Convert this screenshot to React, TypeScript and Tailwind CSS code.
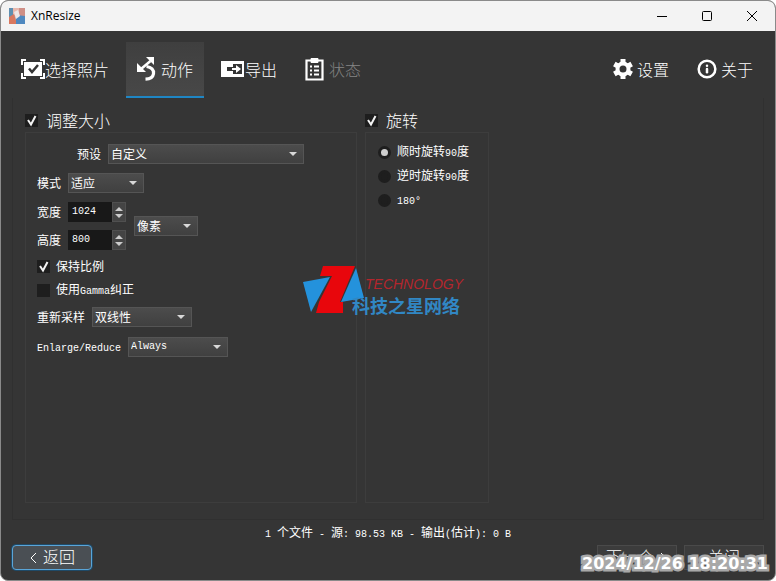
import React from "react";
import { Info } from "lucide-react";
import clsx from "clsx";

const OPTION_LABELS = {
  preset: ["自定义"],
  mode: ["适应"],
  unit: ["像素"],
  resample: ["双线性"],
  enlarge: ["Always"],
};

// Half-width run inside a line of Chinese text
function Latin({ children }: { children: React.ReactNode }) {
  return (
    <span className="font-['Liberation_Mono',monospace] text-[10px] whitespace-pre">
      {children}
    </span>
  );
}

function AppIcon() {
  return (
    <svg viewBox="0 0 16 16" className="h-4 w-4">
      <rect width="16" height="16" fill="#b9a9ac" />
      <rect width="4" height="9" fill="#5f8fb0" />
      <rect x="4" width="6" height="7" fill="#e8b9ae" />
      <rect x="10" width="6" height="8" fill="#cf8f86" />
      <path d="M0 9l5-3 3 10H0z" fill="#d9785f" />
      <path d="M7 7l9 1v8H7z" fill="#4f88bf" />
      <path d="M5 4l4-2 2 6-4 3z" fill="#eee6e6" />
    </svg>
  );
}

function SelectIcon() {
  return (
    <svg viewBox="0 0 24 20" className="h-5 w-6" fill="none">
      <path
        d="M5 1H1v5M19 1h4v5M5 19H1v-5M19 19h4v-5"
        stroke="currentColor"
        strokeWidth="2"
      />
      <rect x="3" y="3" width="18" height="14" fill="currentColor" />
      <path d="M8 9.500l3 3.500 6-7" stroke="#353535" strokeWidth="2.500" />
    </svg>
  );
}

function ActionIcon() {
  return (
    <svg viewBox="0 0 20 24" className="h-6 w-5" fill="none">
      <path d="M9 0h8v8z" fill="currentColor" />
      <path d="M0 6v9h9z" fill="currentColor" />
      <path d="M4 12l9.500-8" stroke="currentColor" strokeWidth="2.600" />
      <path
        d="M9.500 9.500c5 .5 7.500 3.500 7 7.200-.5 3.300-3.200 5.300-8 5.500"
        stroke="currentColor"
        strokeWidth="3.200"
      />
    </svg>
  );
}

function ExportIcon() {
  return (
    <svg viewBox="0 0 24 18" className="h-[18px] w-6" fill="none">
      <path d="M0 1h23v16H0z" fill="currentColor" />
      <path d="M12 4h9v10h-9z" fill="#353535" />
      <path d="M6 7h7v4H6z" fill="#353535" />
      <path d="M11 8h4V5l5 4-5 4v-3h-4z" fill="currentColor" />
    </svg>
  );
}

function StatusIcon() {
  return (
    <svg viewBox="0 0 20 24" className="h-6 w-5" fill="none" stroke="currentColor">
      <path d="M1.500 3.500h16v19h-16z" strokeWidth="2.200" />
      <path d="M6 1.500h7v4H6z" fill="currentColor" />
      <path d="M5 9.500h2M5 13.500h2M5 17.500h2M9 9.500h5M9 13.500h5M9 17.500h5" strokeWidth="1.800" />
    </svg>
  );
}

function GearIcon() {
  return (
    <svg viewBox="0 0 20 20" className="h-5 w-5" fill="none" stroke="currentColor">
      <circle cx="10" cy="10" r="5.500" strokeWidth="4" />
      <path
        d="M10 0v4M10 16v4M1.340 5l3.460 2M15.200 13l3.460 2M1.340 15l3.460-2M15.200 7l3.460-2"
        strokeWidth="5"
      />
    </svg>
  );
}

type ToolButtonProps = {
  icon: React.ReactNode;
  label: string;
  active?: boolean;
  disabled?: boolean;
};

function ToolButton({ icon, label, active, disabled }: ToolButtonProps) {
  return (
    <button
      type="button"
      disabled={disabled}
      className={clsx(
        "flex h-14 shrink-0 items-center border-b-2 px-[11px] text-base font-light",
        active
          ? "border-[#1f86c4] bg-linear-to-b from-[#3f3f3f] to-[#484848]"
          : "border-transparent"
      )}
    >
      <span className="flex w-6 items-center">{icon}</span>
      <span className={clsx("leading-6", disabled && "text-[#858585]")}>{label}</span>
    </button>
  );
}

type SelectFieldProps = {
  id: string;
  options: string[];
  className: string;
};

function SelectField({ id, options, className }: SelectFieldProps) {
  return (
    <div className={clsx("relative h-5", className)}>
      <select
        id={id}
        aria-label={id}
        className={clsx(
          "block h-5 w-full appearance-none border border-[#555555] bg-linear-to-b from-[#4c4c4c] to-[#404040] pl-[2px] leading-4 text-white outline-none",
          id === "enlarge" && "font-['Liberation_Mono',monospace] text-[10px]"
        )}
      >
        {options.map((o) => (
          <option key={o}>{o}</option>
        ))}
      </select>
      <svg
        viewBox="0 0 8 4"
        className="pointer-events-none absolute top-2 right-[7px] h-1 w-2"
        fill="#d8d8d8"
      >
        <path d="M0 0h8L4 4z" />
      </svg>
    </div>
  );
}

function SizeField({ id, label, value }: { id: string; label: string; value: string }) {
  return (
    <div className="flex items-center gap-[7px]">
      <label htmlFor={id}>{label}</label>
      <div className="flex h-5">
        <input
          id={id}
          defaultValue={value}
          className="w-11 bg-[#181818] pl-1 font-['Liberation_Mono',monospace] text-[10px] text-white outline-none"
        />
        <div className="flex w-[14px] flex-col items-center justify-center gap-[3px] border border-[#505050] bg-[#444444]">
          <button type="button" aria-label={`${label} +`}>
            <svg viewBox="0 0 8 4" className="h-1 w-2" fill="#cccccc">
              <path d="M0 4h8L4 0z" />
            </svg>
          </button>
          <button type="button" aria-label={`${label} -`}>
            <svg viewBox="0 0 8 4" className="h-1 w-2" fill="#cccccc">
              <path d="M0 0h8L4 4z" />
            </svg>
          </button>
        </div>
      </div>
    </div>
  );
}

type CheckProps = {
  checked?: boolean;
  large?: boolean;
  children: React.ReactNode;
};

function Check({ checked, large, children }: CheckProps) {
  return (
    <label
      className={clsx(
        "flex items-center",
        large ? "h-6 gap-2 text-base font-light" : "h-4 gap-[6px]"
      )}
    >
      <span className="relative h-[13px] w-[13px]">
        <input
          type="checkbox"
          defaultChecked={checked}
          className="peer block h-[13px] w-[13px] appearance-none bg-[#1e1e1e]"
        />
        <svg
          viewBox="0 0 13 13"
          className="pointer-events-none absolute inset-0 hidden h-[13px] w-[13px] peer-checked:block"
          fill="none"
          stroke="#f2f2f2"
          strokeWidth="2"
        >
          <path d="M3 6l3 4.500L10.500 2" />
        </svg>
      </span>
      <span>{children}</span>
    </label>
  );
}

function Radio({ checked, children }: CheckProps) {
  return (
    <label className="flex h-4 items-center gap-[6px]">
      <input
        type="radio"
        name="rotate"
        defaultChecked={checked}
        className="h-[13px] w-[13px] appearance-none rounded-full border-[3px] border-[#1e1e1e] bg-[#1e1e1e] checked:bg-[#cfcfcf]"
      />
      <span>{children}</span>
    </label>
  );
}

function Watermark() {
  return (
    <svg
      viewBox="0 -5 170 60"
      className="pointer-events-none absolute top-1/2 left-1/2 h-[60px] w-[170px] -translate-x-1/2 -translate-y-1/2"
    >
      <path d="M0 16l27-5L8 46z" fill="#2492dc" />
      <path d="M53 2l8 30-23 4z" fill="#2492dc" />
      <path d="M20 0h32L37 36h3v11H13l3-11L29 10H17z" fill="#e8060c" />
      <text
        x="62"
        y="23"
        fill="#b3262d"
        className="font-['Liberation_Sans',sans-serif] text-[14px] font-normal italic"
      >
        TECHNOLOGY
      </text>
      <text
        x="49"
        y="47"
        fill="#3187c4"
        className="font-['Noto_Sans_CJK_SC',sans-serif] text-[18px] font-bold"
      >
        科技之星网络
      </text>
    </svg>
  );
}

export default function App() {
  return (
    <div className="relative flex min-h-screen flex-col overflow-hidden rounded-lg border border-[#8a8a8a] bg-[#353535] font-['Noto_Sans_CJK_SC',sans-serif] text-xs leading-4 text-white">
      <header className="flex h-[30px] items-center bg-[#f3f3f3] pl-2 text-black">
        <AppIcon />
        <h1 className="ml-[6px] font-['Open_Sans',sans-serif] text-xs">XnResize</h1>
        <div className="ml-auto flex">
          <button type="button" aria-label="Minimize" className="flex w-[45px] justify-center">
            <svg viewBox="0 0 12 12" className="h-3 w-3" stroke="currentColor">
              <path d="M1 6.500h10" />
            </svg>
          </button>
          <button type="button" aria-label="Maximize" className="flex w-[45px] justify-center">
            <svg viewBox="0 0 12 12" className="h-3 w-3" fill="none" stroke="currentColor">
              <rect x="1.500" y="1.500" width="9" height="9" rx="1" />
            </svg>
          </button>
          <button type="button" aria-label="Close" className="flex w-[46px] justify-center">
            <svg viewBox="0 0 12 12" className="h-3 w-3" stroke="currentColor">
              <path d="M1 1l10 10M11 1L1 11" />
            </svg>
          </button>
        </div>
      </header>

      <nav className="flex gap-[6px] pt-[11px] pr-[11px] pl-[9px]">
        <ToolButton icon={<SelectIcon />} label="选择照片" />
        <ToolButton icon={<ActionIcon />} label="动作" active />
        <ToolButton icon={<ExportIcon />} label="导出" />
        <ToolButton icon={<StatusIcon />} label="状态" disabled />
        <div className="ml-auto flex gap-[6px]">
          <ToolButton icon={<GearIcon />} label="设置" />
          <ToolButton icon={<Info className="h-5 w-5" strokeWidth={3} />} label="关于" />
        </div>
      </nav>

      <main className="mx-[11px] flex flex-1 gap-2 border border-t-0 border-[#303030] px-3 pt-[10px] pb-4">
        <section className="flex w-83 flex-col">
          <Check checked large>
            调整大小
          </Check>
          <div className="flex flex-1 flex-col border border-[#3d3d3d] px-[11px] pt-[11px]">
            <div className="flex h-5 items-center gap-[7px] pl-10">
              <label htmlFor="preset">预设</label>
              <SelectField id="preset" options={OPTION_LABELS.preset} className="w-49" />
            </div>
            <div className="mt-[9px] flex h-5 items-center gap-[7px]">
              <label htmlFor="mode">模式</label>
              <SelectField id="mode" options={OPTION_LABELS.mode} className="w-19" />
            </div>
            <div className="mt-[9px] flex items-center gap-2">
              <div className="flex flex-col gap-2">
                <SizeField id="width" label="宽度" value="1024" />
                <SizeField id="height" label="高度" value="800" />
              </div>
              <SelectField id="unit" options={OPTION_LABELS.unit} className="w-16" />
            </div>
            <div className="mt-2 flex flex-col gap-2">
              <Check checked>保持比例</Check>
              <Check>
                使用<Latin>Gamma</Latin>纠正
              </Check>
            </div>
            <div className="mt-[9px] flex h-5 items-center gap-[7px]">
              <label htmlFor="resample">重新采样</label>
              <SelectField id="resample" options={OPTION_LABELS.resample} className="w-25" />
            </div>
            <div className="mt-[10px] flex h-5 items-center gap-[7px]">
              <label htmlFor="enlarge">
                <Latin>Enlarge/Reduce</Latin>
              </label>
              <SelectField id="enlarge" options={OPTION_LABELS.enlarge} className="w-25" />
            </div>
          </div>
        </section>

        <section className="flex w-31 flex-col">
          <Check checked large>
            旋转
          </Check>
          <div className="flex flex-1 flex-col gap-2 border border-[#3d3d3d] px-3 pt-[11px]">
            <Radio checked>
              顺时旋转<Latin>90</Latin>度
            </Radio>
            <Radio>
              逆时旋转<Latin>90</Latin>度
            </Radio>
            <Radio>
              <Latin>180°</Latin>
            </Radio>
          </div>
        </section>
      </main>

      <p className="mt-1 text-center">
        <Latin>1 </Latin>个文件<Latin> - </Latin>源<Latin>: 98.53 KB - </Latin>输出
        <Latin>(</Latin>估计<Latin>): 0 B</Latin>
      </p>

      <footer className="mt-[2px] mb-[10px] flex gap-[7px] pr-[11px] pl-[11px] text-base leading-5 font-light">
        <button
          type="button"
          className="mr-auto flex h-[25px] w-20 items-center justify-center gap-[6px] rounded-sm border border-[#5aa5d8] bg-[#4a4f54] pb-1 ring-1 ring-[#1f4a68]"
        >
          <svg viewBox="0 0 8 12" className="mt-1 h-3 w-2" fill="none" stroke="currentColor">
            <path d="M7 1L2 6l5 5" />
          </svg>
          返回
        </button>
        <button
          type="button"
          className="flex h-[25px] w-20 items-center justify-center gap-[6px] border border-[#4a4a4a] bg-[#3c3c3c] pb-1"
        >
          下一个
          <svg viewBox="0 0 8 12" className="mt-1 h-3 w-2" fill="none" stroke="currentColor">
            <path d="M1 1l5 5-5 5" />
          </svg>
        </button>
        <button
          type="button"
          className="flex h-[25px] w-20 items-center justify-center border border-[#4a4a4a] bg-[#3c3c3c] pb-1"
        >
          关闭
        </button>
      </footer>

      <Watermark />
      <time className="absolute right-[7px] bottom-[6px] font-['DejaVu_Sans',sans-serif] text-base leading-5 font-bold [paint-order:stroke_fill] [-webkit-text-stroke:5px_#a8a8a8]">
        2024/12/26 18:20:31
      </time>
    </div>
  );
}
